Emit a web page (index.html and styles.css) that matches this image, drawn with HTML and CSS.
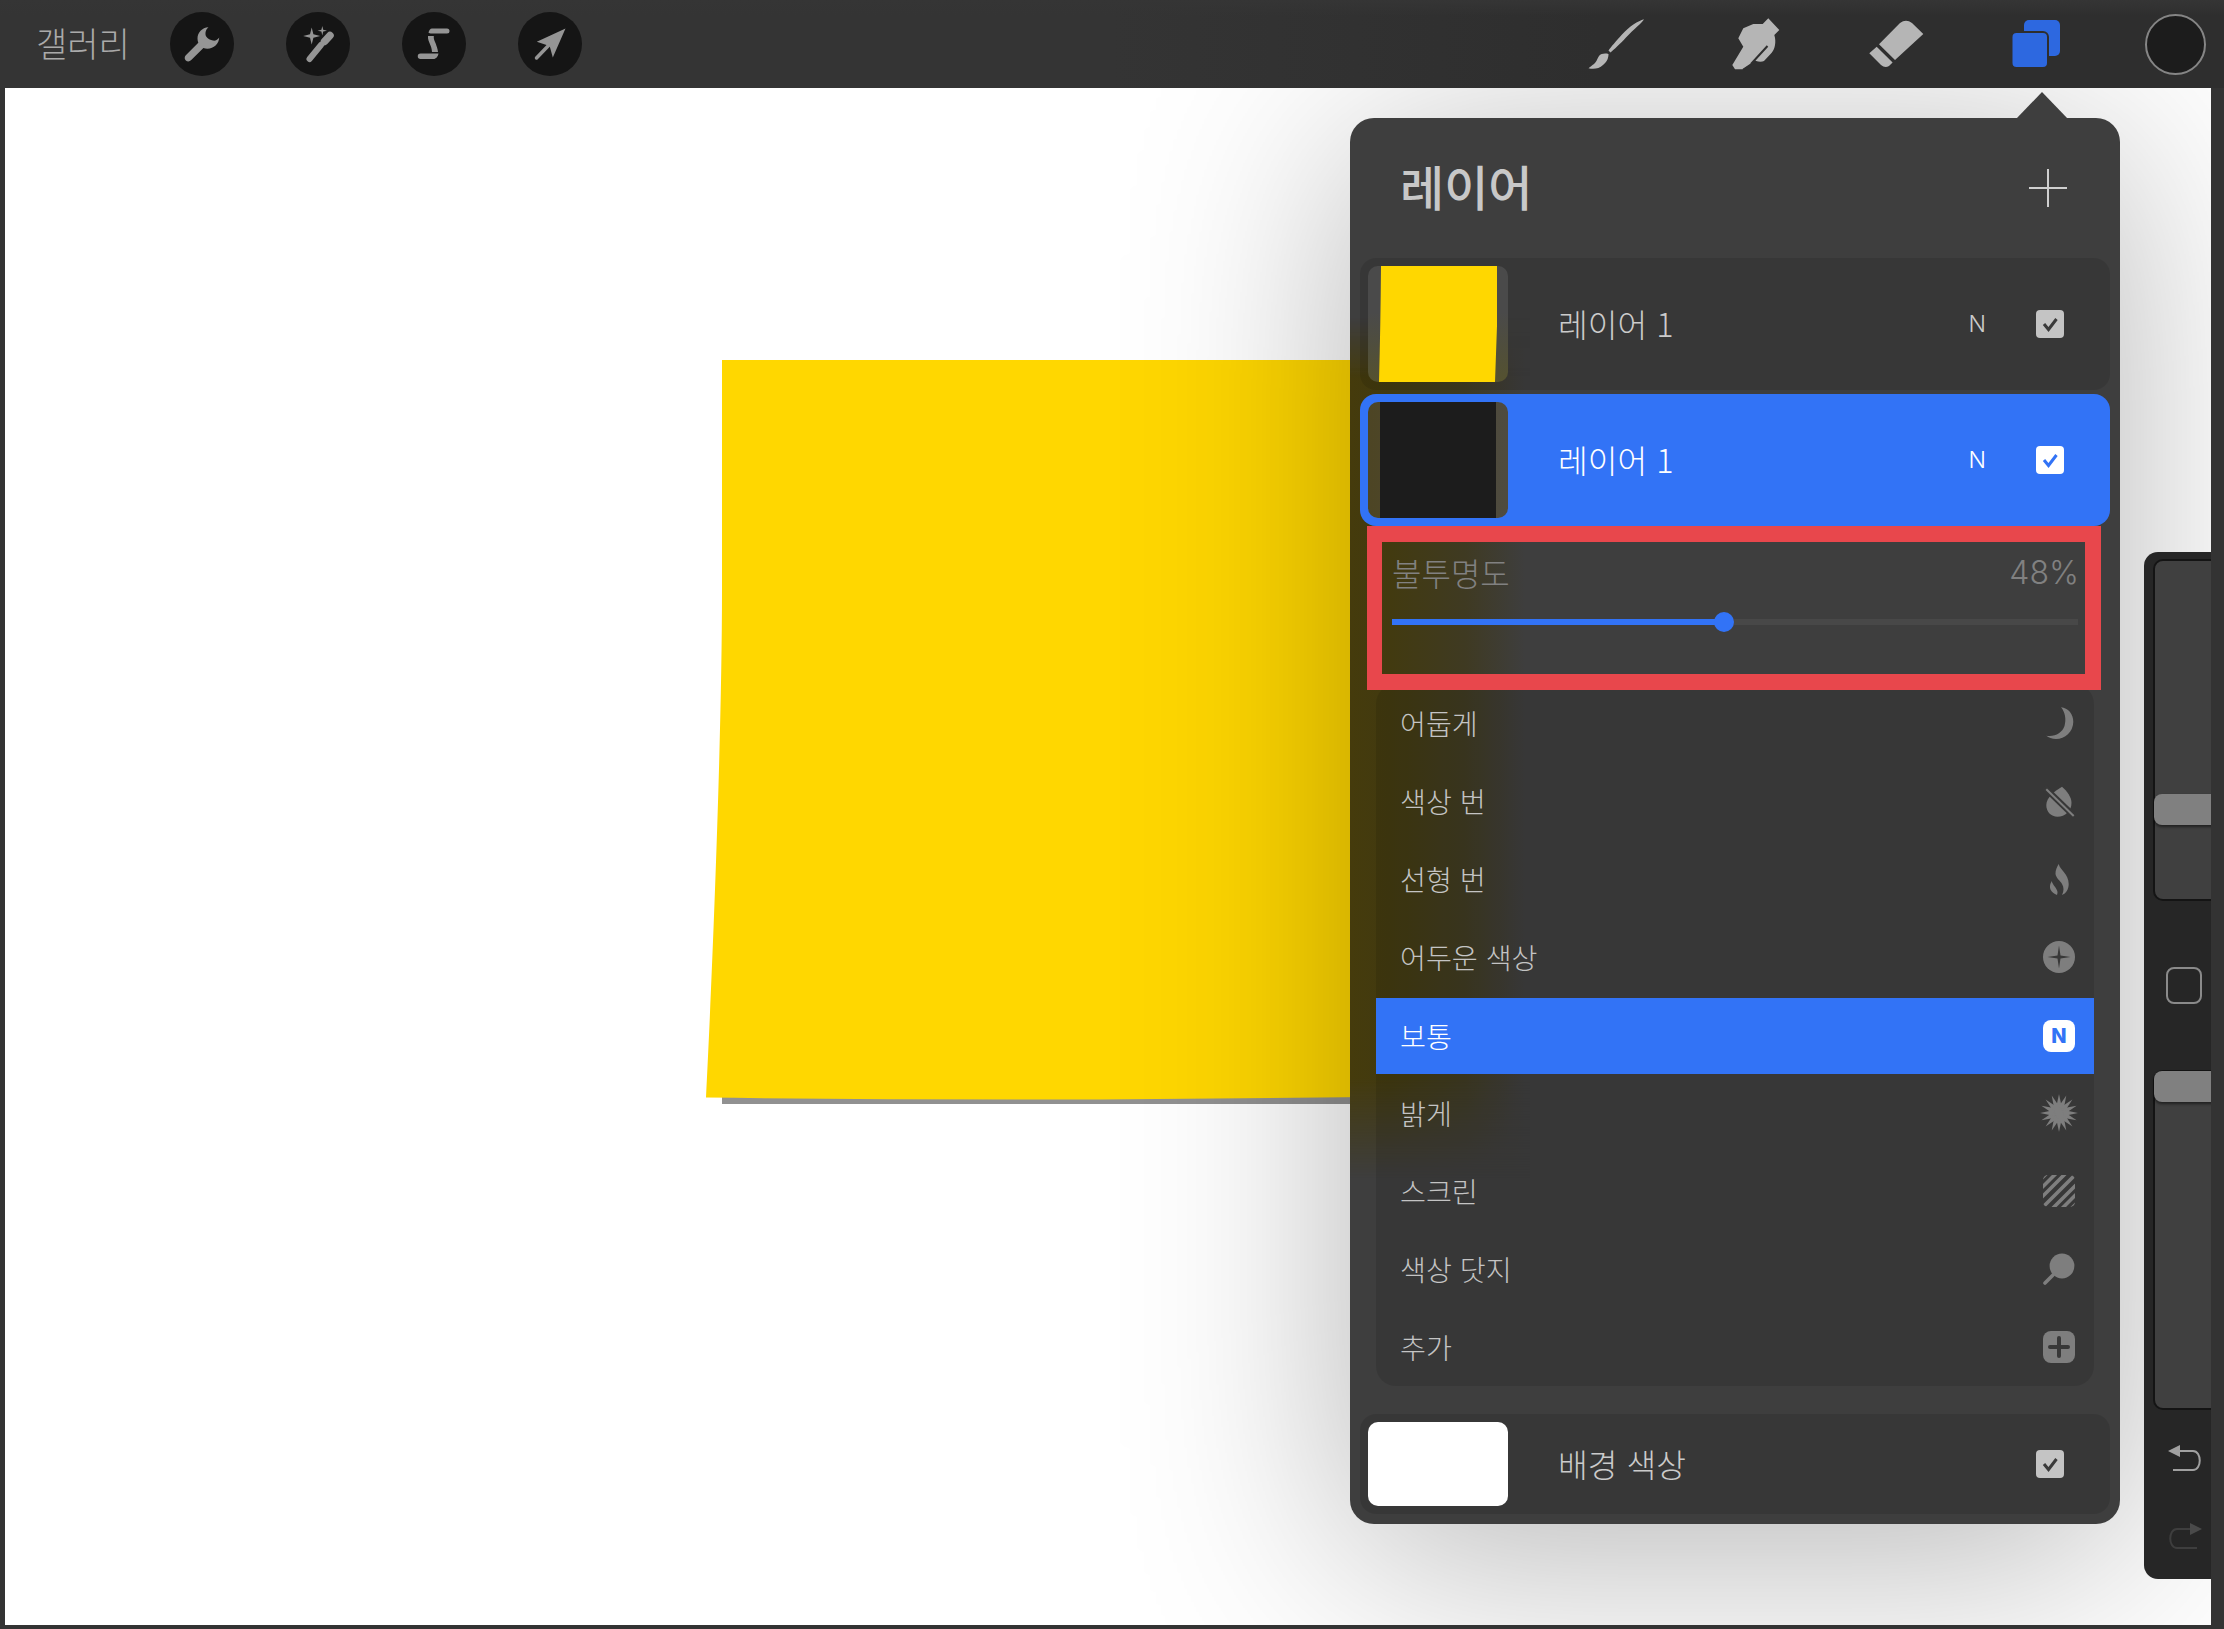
FILE: index.html
```html
<!DOCTYPE html>
<html lang="ko">
<head>
<meta charset="utf-8">
<title>레이어</title>
<link rel="stylesheet" href="styles.css">
</head>
<body>
<header class="topbar">
  <span class="gallery">갤러리</span>
  <div class="tools-left">
    <span class="round-tool"><svg viewBox="0 0 64 64"><path d="M38.5 15.2C32 15.6 27.5 20.5 27.5 26.5c0 1.5.3 2.9.8 4.2L15.8 43.2c-1.5 1.5-1.5 3.8 0 5.2s3.7 1.4 5.2-.1L33.4 36c1.3.5 2.6.7 4 .7 6.4 0 11.6-4.9 11.8-11.2-1.4 2.300-3.700 3.500-6.200 3.100s-5.500-2-6.800-4.100c-1.400-2.500-.7-7 2.300-9.300z"/></svg></span>
    <span class="round-tool"><svg viewBox="0 0 64 64"><path d="M25.7 15.500l1.700 6.800 6.800 1.700-6.800 1.700-1.700 6.800-1.700-6.800-6.800-1.700 6.800-1.700zM36.300 14l.9 3.800 3.800.9-3.800.9-.9 3.800-.9-3.800-3.800-.9 3.800-.9z"/><path class="ln" stroke-width="6" d="M23.500 47L35 33"/><path class="ln" stroke-width="7.500" d="M38.500 29.500L44 23.500"/></svg></span>
    <span class="round-tool"><svg viewBox="0 0 64 64"><path d="M30 16.500H45a2.500 2.500 0 0 1 0 5H31.500c-2.500 0-4.300.2-5-1 .6-2 1.700-4 3.500-4zM26 24h5.800c-.3 3 .6 4.500 1.900 7.500 1 3 2 5.500 2.300 8.500h-6c-.2-3.500-.9-5-2.100-8-1-2.800-2.200-4.500-1.900-8zM18.500 41.500H36.500c-.5 3-2.500 5.500-5 5.500H18.500a2.750 2.750 0 0 1 0-5.500z"/></svg></span>
    <span class="round-tool"><svg viewBox="0 0 64 64"><path d="M47.500 16.500L18.800 29.800l9.700 3.200 3 .5 3.300 12z"/><path class="ln" stroke-width="3.500" d="M18.500 46L31 33"/></svg></span>
  </div>
  <div class="tools-right">
    <svg class="tool-icon t-brush" viewBox="0 0 64 64"><path d="M60 7.300C54 9 46 14 38 22.500 32 29 27 35 24.500 38.500l2 2C30 37.500 36 32 42 25.500 50 17 58 11 60 7.300zM24.500 42c-3.500-1-7.500-.5-9.500 2-2 3-2.500 6-5 8-2 1.500-4 3-5.500 4.200 4.500 1.300 10.500.8 14.500-3.200 4-3 5.500-7 5.500-11z"/></svg>
    <svg class="tool-icon t-smudge" viewBox="0 0 64 64"><path d="M45.300 6.300L56.300 18l-5 5c1.200 4 1.200 7 .7 10-.5 3-1.500 5.500-3.300 7.700L41 49c-2 1-5 1-8 0l-13.300 8.300H12L9.300 53l11-18.300-5-8.400 5-10 10-4.300h9.400z"/><path class="slit" d="M44.500 34L28 52M33 49L20 57.800"/></svg>
    <svg class="tool-icon t-eraser" viewBox="0 0 64 64"><path d="M15 32.300L36 11q6-4.500 12 0l11.300 11L31 48zM12.700 34.700l-7.400 6.600L17 53q4 3.500 8 1l3.600-3.400z"/></svg>
    <svg class="tool-icon t-layers" viewBox="0 0 64 64"><rect class="lay" x="20" y="8" width="36" height="36" rx="5"/><rect class="lay lay-front" x="7.500" y="20" width="36.500" height="36" rx="5"/></svg>
    <span class="color-well"></span>
  </div>
</header>

<main class="canvas">
  <svg class="art" viewBox="0 0 720 780" aria-hidden="true">
    <rect class="art-shadow" x="22" y="750" width="698" height="14"/>
    <path class="art-sheet" d="M22 20H720V756.500L400 759.500Q200 760 6 757.500C12 640 22 400 22 250Z"/>
  </svg>

  <section class="panel">
    <span class="panel-arrow"></span>
    <div class="panel-tint"></div>
    <div class="panel-head">
      <h1 class="panel-title">레이어</h1>
      <svg class="plus" viewBox="0 0 38 38"><path d="M19 0V38M0 19H38"/></svg>
    </div>

    <div class="layer-row">
      <div class="thumb thumb-art"><svg viewBox="0 0 140 116"><path class="art-sheet" d="M13 0H129V60L127 116H11Q12.500 60 13 0Z"/></svg></div>
      <span class="layer-name">레이어 1</span>
      <span class="mode">N</span>
      <svg class="check" viewBox="0 0 28 28"><rect class="check-box" width="28" height="28" rx="4"/><path class="check-mark" d="M8 14L12.500 19.500L20.500 9"/></svg>
    </div>

    <div class="layer-row is-active">
      <div class="thumb thumb-dark"><div class="thumb-fill"></div></div>
      <span class="layer-name">레이어 1</span>
      <span class="mode">N</span>
      <svg class="check" viewBox="0 0 28 28"><rect class="check-box" width="28" height="28" rx="4"/><path class="check-mark" d="M8 14L12.500 19.500L20.500 9"/></svg>
    </div>

    <div class="opacity">
      <div class="opacity-head"><span>불투명도</span><span class="opacity-val">48%</span></div>
      <div class="track"><div class="track-fill" style="width:48.4%"><span class="knob"></span></div></div>
    </div>

    <ul class="blend-list">
      <li class="blend"><span class="blend-name">어둡게</span>
        <svg class="blend-icon" viewBox="0 0 32 32"><path d="M18 .3C25 1 30.500 7 30.300 15 30 25 22 32 13 32 9 32 5.500 30.500 3.300 28.700 12 30 19 26 21.500 19 23.500 12 22 5 18 .3z"/></svg></li>
      <li class="blend"><span class="blend-name">색상 번</span>
        <svg class="blend-icon" viewBox="0 0 32 32"><path d="M19 1.700C24 6 28.500 12 28.500 18c0 8-6.500 13.700-14 13.700C8 31.700 3.300 27 3.300 20 3.300 12 12 6 19 1.700z"/><path class="cut-wide" d="M1 2L33 33"/><path class="cut-thin" d="M3.300 4.300L30.700 31"/></svg></li>
      <li class="blend"><span class="blend-name">선형 번</span>
        <svg class="blend-icon" viewBox="0 0 32 32"><path d="M15.700 1C17 7 25.700 11 25.700 21c0 5.500-2.700 9.500-6.700 11 2-4 2-8 0-11-1.500-3-6-6-6.500-10-.2-4 1.500-7 3.200-10zM8.700 18c.8 4 5.300 7 5.800 11 0 1-.2 2-.5 3-4-1.500-7.500-5-7-9 .2-2 1-3.500 1.700-5z"/></svg></li>
      <li class="blend"><span class="blend-name">어두운 색상</span>
        <svg class="blend-icon" viewBox="0 0 32 32"><circle cx="16" cy="16" r="16"/><path class="icon-hole" d="M16 4.500l1.500 10 10 1.500-10 1.500-1.500 10-1.500-10-10-1.500 10-1.500z"/></svg></li>
      <li class="blend is-current"><span class="blend-name">보통</span><span class="n-badge">N</span></li>
      <li class="blend"><span class="blend-name">밝게</span>
        <svg class="blend-icon burst" viewBox="0 0 40 40"><circle cx="20" cy="20" r="8"/><g><path d="M20 1L24 20 20 39 16 20z"/><path transform="rotate(22.500 20 20)" d="M20 1L24 20 20 39 16 20z"/><path transform="rotate(45 20 20)" d="M20 1L24 20 20 39 16 20z"/><path transform="rotate(67.500 20 20)" d="M20 1L24 20 20 39 16 20z"/><path transform="rotate(90 20 20)" d="M20 1L24 20 20 39 16 20z"/><path transform="rotate(112.500 20 20)" d="M20 1L24 20 20 39 16 20z"/><path transform="rotate(135 20 20)" d="M20 1L24 20 20 39 16 20z"/><path transform="rotate(157.500 20 20)" d="M20 1L24 20 20 39 16 20z"/></g></svg></li>
      <li class="blend"><span class="blend-name">스크린</span>
        <svg class="blend-icon" viewBox="0 0 32 32"><defs><clipPath id="scr"><rect width="32" height="32" rx="5"/></clipPath></defs><g clip-path="url(#scr)" class="stripes"><path d="M-4 6L6-4M-4 15.500L15.500-4M-4 25L25-4M-2 34L34-2M7 36L36 7M16.500 36L36 16.500M26 36L36 26"/></g></svg></li>
      <li class="blend"><span class="blend-name">색상 닷지</span>
        <svg class="blend-icon" viewBox="0 0 32 32"><circle cx="19" cy="13" r="12.400"/><path class="icon-handle" d="M10 22L2 30"/></svg></li>
      <li class="blend"><span class="blend-name">추가</span>
        <svg class="blend-icon" viewBox="0 0 32 32"><rect width="32" height="32" rx="8"/><path class="icon-plus" d="M16 7V25M7 16H25"/></svg></li>
    </ul>

    <div class="layer-row is-bg">
      <div class="thumb thumb-white"></div>
      <span class="layer-name">배경 색상</span>
      <svg class="check" viewBox="0 0 28 28"><rect class="check-box" width="28" height="28" rx="4"/><path class="check-mark" d="M8 14L12.500 19.500L20.500 9"/></svg>
    </div>
  </section>

  <aside class="sidebar">
    <div class="side-slider slider-top"><span class="side-thumb"></span></div>
    <span class="side-square"></span>
    <div class="side-slider slider-bottom"><span class="side-thumb"></span></div>
    <svg class="side-arrow" viewBox="0 0 36 30"><path class="arrow-head" d="M1 9L13 3V15z"/><path class="arrow-line" d="M13 9H26C35 9 35 28 26 28H6"/></svg>
    <svg class="side-arrow side-redo" viewBox="0 0 36 30"><path class="arrow-head" d="M35 9L23 3V15z"/><path class="arrow-line" d="M23 9H10C1 9 1 28 10 28H30"/></svg>
  </aside>
</main>
</body>
</html>
```
FILE: styles.css
```css
* { box-sizing: border-box; }
html, body { margin: 0; padding: 0; }
body {
  width: 2224px;
  height: 1629px;
  overflow: hidden;
  background: #333;
  font-family: "Noto Sans CJK KR", "Noto Sans", sans-serif;
  font-weight: 300;
  display: flex;
  flex-direction: column;
}

/* top bar */
.topbar {
  height: 88px;
  flex: none;
  display: flex;
  align-items: center;
  padding: 0 18px 0 36px;
  background:
    linear-gradient(180deg, #353535 0, rgba(53,53,53,0) 16px),
    linear-gradient(90deg, #343434 50%, #2e2e2e 72%);
}
.gallery { font-size: 34px; color: #aaa; width: 91px; white-space: nowrap; margin-bottom: 3px; }
.tools-left { display: flex; gap: 52px; margin-left: 43px; }
.round-tool {
  width: 64px; height: 64px; border-radius: 50%;
  background: #151515;
  display: block;
}
.round-tool svg { display: block; width: 64px; height: 64px; fill: #959595; }
.round-tool .ln { fill: none; stroke: #959595; stroke-linecap: round; }
.tools-right { margin-left: auto; display: flex; align-items: center; }
.tool-icon { width: 64px; height: 64px; flex: none; fill: #b5b5b5; }
.t-smudge { margin-left: 75px; }
.t-eraser { margin-left: 77px; }
.t-layers { margin-left: 76px; }
.slit { fill: none; stroke: #2e2e2e; stroke-width: 2; }
.lay { fill: #2d68e0; }
.lay-front { stroke: #2e2e2e; stroke-width: 2; }
.color-well {
  margin-left: 77px;
  width: 61px; height: 61px; border-radius: 50%;
  background: #1c1c1c;
  border: 2px solid #858585;
  flex: none;
}

/* canvas */
.canvas {
  position: relative;
  flex: none;
  width: 2206px;
  height: 1537px;
  margin-left: 5px;
  background: #fff;
  overflow: hidden;
}
.art { position: absolute; left: 695px; top: 252px; width: 720px; height: 780px; }
.art-shadow { fill: #919191; }
.art-sheet { fill: #ffd700; }

/* panel */
.panel {
  position: absolute;
  left: 1345px;
  top: 30px;
  width: 770px;
  height: 1406px;
  padding: 0 10px 10px 10px;
  background: #3e3e3e;
  border-radius: 24px;
  box-shadow: 0 30px 220px rgba(0,0,0,.3);
}
.panel-arrow {
  position: absolute;
  left: 666px;
  top: -26px;
  width: 52px;
  height: 27px;
  background: #3e3e3e;
  clip-path: polygon(50% 0, 100% 100%, 0 100%);
}
.panel-tint {
  position: absolute;
  left: 0;
  top: 200px;
  width: 180px;
  height: 880px;
  background: linear-gradient(90deg, #453b0c 0, #423a10 40px, #3f3a22 115px, #3e3e3e 175px);
  -webkit-mask-image: linear-gradient(180deg, transparent 0, #000 60px, #000 760px, transparent 860px);
  mask-image: linear-gradient(180deg, transparent 0, #000 60px, #000 760px, transparent 860px);
}
.panel-head {
  position: relative;
  height: 140px;
  display: flex;
  align-items: center;
  justify-content: space-between;
  padding: 0 43px 0 40px;
}
.panel-title { margin: 0 0 6px; font-size: 48px; font-weight: 500; color: #c8c8c8; line-height: 1; }
.plus { width: 38px; height: 38px; fill: none; stroke: #cfcfcf; stroke-width: 2; }

.layer-row {
  position: relative;
  height: 132px;
  display: flex;
  align-items: center;
  padding: 0 46px 0 8px;
  border-radius: 16px;
  background: rgba(0,0,0,.1);
  color: #cbcbcb;
}
.layer-row + .layer-row { margin-top: 4px; }
.layer-row.is-active { background: #3273f6; color: #fff; }
.layer-row.is-bg { height: 100px; margin-top: 28px; }
.thumb { width: 140px; height: 116px; border-radius: 10px; flex: none; overflow: hidden; }
.thumb svg { display: block; width: 140px; height: 116px; }
.thumb-art { background: linear-gradient(180deg, #4a4a4a 40%, #55522f 100%); }
.thumb-dark { background: linear-gradient(90deg, #4d4524, #4e4b40); }
.thumb-fill { width: 116px; height: 116px; margin-left: 12px; background: #1c1c1c; }
.is-bg .thumb { height: 84px; }
.thumb-white { background: #fff; }
.layer-name { margin: 0 0 3px 50px; font-size: 32.300px; white-space: nowrap; }
.mode { margin-left: auto; margin-right: 50px; font-family: "Inter", "Noto Sans", sans-serif; font-size: 23px; font-weight: 300; }
.check { width: 28px; height: 28px; flex: none; }
.is-bg .check { margin-left: auto; }
.check-box { fill: #c4c4c4; }
.check-mark { fill: none; stroke: #3a3a3a; stroke-width: 3; }
.is-active .check-box { fill: #fff; }
.is-active .check-mark { stroke: #3273f6; }

/* opacity */
.opacity {
  position: relative;
  z-index: 1;
  height: 164px;
  margin: 0 9px 0 7px;
  border: 16px solid #e8474c;
  border-left-width: 15px;
  padding: 0 6px 0 10px;
  color: #818181;
}
.opacity-head {
  display: flex;
  justify-content: space-between;
  align-items: center;
  height: 60px;
  font-size: 32px;
  white-space: nowrap;
}
.opacity-val { font-family: "Inter", "Noto Sans", sans-serif; font-weight: 300; font-size: 32px; }
.track { height: 6px; margin-top: 17px; margin-right: 1px; background: #484848; }
.track-fill { position: relative; height: 6px; background: #3273f6; }
.knob {
  position: absolute;
  right: -10px;
  top: -7px;
  width: 20px; height: 20px;
  border-radius: 50%;
  background: #3273f6;
}

/* blend list */
.blend-list {
  position: relative;
  list-style: none;
  margin: -6px 16px 0 16px;
  padding: 0;
  height: 702px;
  background: rgba(0,0,0,.1);
  border-radius: 20px;
  overflow: hidden;
  font-size: 28.200px;
  color: #c4c4c4;
}
.blend {
  height: 78px;
  display: flex;
  align-items: center;
  justify-content: space-between;
  padding: 0 19px 0 24px;
  white-space: nowrap;
}
.blend-name { margin-bottom: 2px; }
.blend.is-current { background: #3273f6; color: #fff; height: 76px; margin-top: 2px; }
.blend-icon { width: 32px; height: 32px; fill: #7e7e7e; flex: none; }
.burst { width: 40px; height: 40px; margin-right: -4px; }
.cut-wide { fill: none; stroke: #383838; stroke-width: 6; }
.cut-thin { fill: none; stroke: #7e7e7e; stroke-width: 2; }
.icon-hole { fill: #383838; }
.stripes { fill: none; stroke: #7e7e7e; stroke-width: 3.600; }
.icon-handle { fill: none; stroke: #7e7e7e; stroke-width: 3.600; stroke-linecap: round; }
.icon-plus { fill: none; stroke: #383838; stroke-width: 4; stroke-linecap: round; }
.n-badge {
  width: 32px; height: 32px; border-radius: 8px;
  background: #fff; color: #3273f6;
  font-family: "Inter", "Noto Sans", sans-serif;
  font-size: 20px; font-weight: 800;
  display: flex; align-items: center; justify-content: center;
}

/* right sidebar */
.sidebar {
  position: absolute;
  left: 2139px;
  top: 464px;
  width: 90px;
  height: 1027px;
  background: #262626;
  border-radius: 14px;
  padding-top: 7px;
  display: flex;
  flex-direction: column;
  align-items: flex-start;
}
.side-slider {
  position: relative;
  margin-left: 9px;
  width: 80px;
  background: #404040;
  border: 2px solid #141414;
  border-radius: 10px;
  flex: none;
}
.slider-top { height: 342px; }
.slider-bottom { height: 340px; margin-top: 66px; }
.side-thumb {
  position: absolute;
  left: -1px;
  right: 0;
  height: 31px;
  background: #808080;
  border-radius: 8px;
  box-shadow: 0 2px 3px rgba(0,0,0,.5);
}
.slider-top .side-thumb { top: 233px; }
.slider-bottom .side-thumb { top: -1px; }
.side-square {
  margin: 66px 0 0 22px;
  width: 36px;
  height: 37px;
  border: 2px solid #8a8a8a;
  border-radius: 8px;
  flex: none;
}
.side-arrow { width: 36px; height: 30px; margin: 32px 0 0 23px; flex: none; }
.arrow-head { fill: #a0a0a0; }
.arrow-line { fill: none; stroke: #a0a0a0; stroke-width: 2; }
.side-redo { margin-top: 48px; }
.side-redo .arrow-head { fill: #4a4a4a; }
.side-redo .arrow-line { stroke: #3e3e3e; }
```
